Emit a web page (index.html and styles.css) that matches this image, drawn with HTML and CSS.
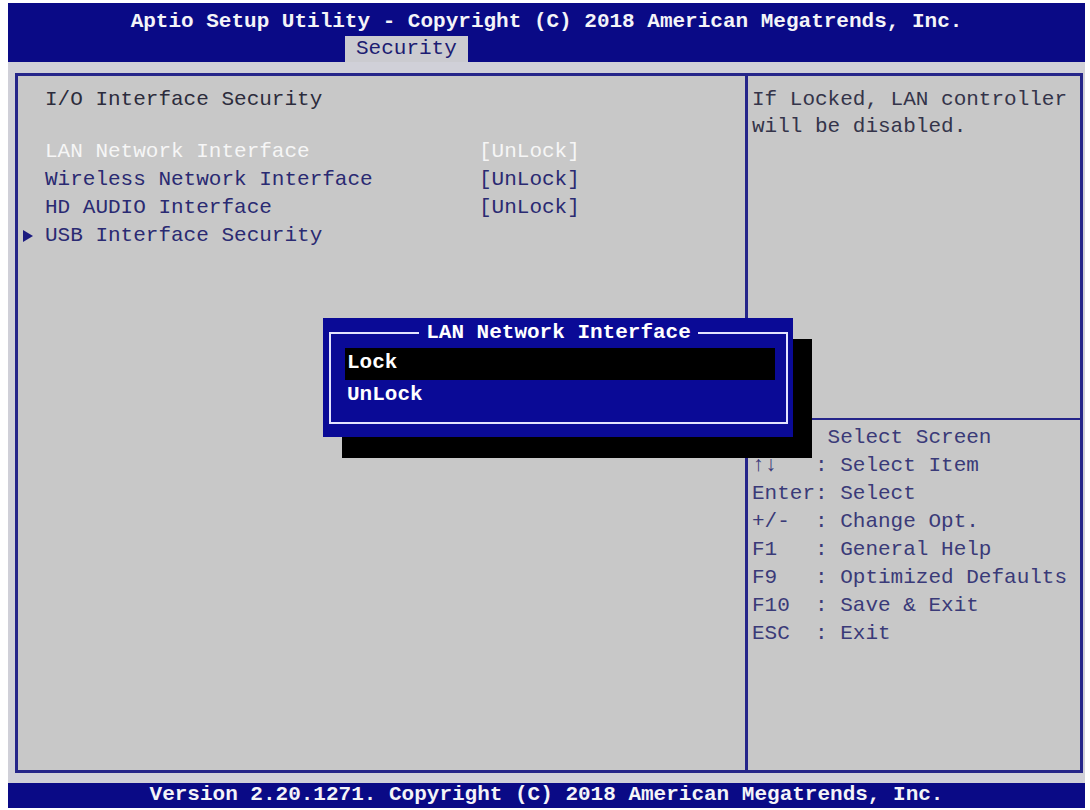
FILE: index.html
```html
<!DOCTYPE html>
<html lang="en">
<head>
    <meta charset="UTF-8">
    <title>Aptio Setup Utility - Security</title>
    <link rel="stylesheet" href="styles.css">
</head>
<body>
    <div class="screen">
        <div class="topbar">
            <div class="title">Aptio Setup Utility - Copyright (C) 2018 American Megatrends, Inc.</div>
            <div class="tabs">
                <span class="tab">Security</span>
            </div>
        </div>
        <div class="main">
            <div class="frame">
                <div class="left">
                    <div class="section-title">I/O Interface Security</div>
                    <div class="rows">
                        <div class="row active"><span class="label">LAN Network Interface</span><span class="value">[UnLock]</span></div>
                        <div class="row"><span class="label">Wireless Network Interface</span><span class="value">[UnLock]</span></div>
                        <div class="row"><span class="label">HD AUDIO Interface</span><span class="value">[UnLock]</span></div>
                        <div class="row submenu"><span class="pointer"></span><span class="label">USB Interface Security</span></div>
                    </div>
                </div>
                <div class="right">
                    <div class="help">If Locked, LAN controller<br>will be disabled.</div>
                    <div class="keys">
                        <div class="key">→←  : Select Screen</div>
                        <div class="key">↑↓   : Select Item</div>
                        <div class="key">Enter: Select</div>
                        <div class="key">+/-  : Change Opt.</div>
                        <div class="key">F1   : General Help</div>
                        <div class="key">F9   : Optimized Defaults</div>
                        <div class="key">F10  : Save &amp; Exit</div>
                        <div class="key">ESC  : Exit</div>
                    </div>
                </div>

                <!-- option popup -->
                <div class="popup">
                    <div class="popup-box">
                        <span class="popup-title">LAN Network Interface</span>
                        <div class="option selected">Lock</div>
                        <div class="option">UnLock</div>
                    </div>
                </div>
            </div>
        </div>
        <div class="footer">Version 2.20.1271. Copyright (C) 2018 American Megatrends, Inc.</div>
    </div>
</body>
</html>
```

FILE: styles.css
```css
body {
    margin: 0;
    background: #ffffff;
    font-family: "Liberation Mono", "DejaVu Sans Mono", monospace;
    font-size: 21px;
}
.screen {
    margin: 3px 0 0 8px;
    width: 1077px;
    height: 805px;
    display: flex;
    flex-direction: column;
}
.topbar {
    background: #0a0a86;
    height: 59px;
    display: flex;
    flex-direction: column;
}
.title {
    height: 33px;
    line-height: 37px;
    text-align: center;
    color: #f4f4f8;
    font-weight: bold;
}
.tabs {
    display: flex;
    padding-left: 337px;
}
.tab {
    background: #cbcbd0;
    color: #1c1c72;
    height: 26px;
    line-height: 26px;
    padding: 0 11px;
}
.main {
    flex: 1;
    min-height: 0;
    background: #d0d0d8;
    padding: 11px 2px 10px 7px;
    display: flex;
}
.frame {
    flex: 1;
    position: relative;
    display: flex;
    border: 3px solid #25258a;
    background: #c8c8c8;
}
.left {
    width: 700px;
    padding: 10px 0 0 27px;
    border-right: 3px solid #25258a;
}
.section-title {
    color: #2c2c3c;
    line-height: 28px;
    margin-bottom: 24px;
}
.row {
    display: flex;
    line-height: 28px;
    color: #2a2a72;
    white-space: pre;
}
.row .label {
    width: 434px;
}
.row.active {
    color: #f6f6f6;
}
.submenu {
    position: relative;
}
.pointer {
    position: absolute;
    left: -22px;
    top: 8px;
    width: 0;
    height: 0;
    border-top: 6px solid transparent;
    border-bottom: 6px solid transparent;
    border-left: 10px solid #1a1a80;
}
.right {
    flex: 1;
    display: flex;
    flex-direction: column;
}
.help {
    height: 332px;
    padding: 10px 0 0 4px;
    line-height: 27px;
    color: #34344a;
    border-bottom: 2px solid #25258a;
}
.keys {
    padding: 4px 0 0 4px;
}
.key {
    line-height: 28px;
    color: #3a3a78;
    white-space: pre;
}
.popup {
    position: absolute;
    left: 305px;
    top: 242px;
    width: 470px;
    height: 119px;
    box-sizing: border-box;
    background: #0a0a96;
    box-shadow: 19px 21px 0 #000000;
    padding: 14px 5px 0 6px;
}
.popup-box {
    position: relative;
    height: 92px;
    box-sizing: border-box;
    border: 2px solid #e4e4ff;
    padding: 14px 11px 0 14px;
}
.popup-title {
    position: absolute;
    top: -14px;
    left: 0;
    right: 0;
    margin: 0 auto;
    width: max-content;
    padding: 0 7px;
    background: #0a0a96;
    color: #ffffff;
    font-weight: bold;
    line-height: 26px;
}
.option {
    height: 32px;
    line-height: 30px;
    padding-left: 2px;
    color: #ffffff;
    font-weight: bold;
}
.option.selected {
    background: #000000;
}
.footer {
    background: #0a0a86;
    height: 25px;
    line-height: 23px;
    text-align: center;
    color: #f4f4f8;
    font-weight: bold;
}
```
